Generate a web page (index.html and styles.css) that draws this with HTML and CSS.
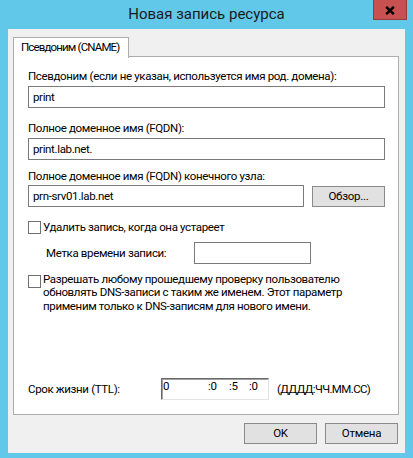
FILE: index.html
```html
<!DOCTYPE html>
<html lang="ru">
<head>
<meta charset="utf-8">
<title>Новая запись ресурса</title>
<link rel="stylesheet" href="styles.css">
</head>
<body>
<div class="window">
  <div class="titlebar">
    <span class="title">Новая запись ресурса</span>
    <button class="close" aria-label="Закрыть">
      <svg width="10" height="9" viewBox="0 0 10 9"><path d="M1.2 0.8 L8.8 8.2 M8.8 0.8 L1.2 8.2" stroke="#000" stroke-width="2.4" fill="none"/></svg>
    </button>
  </div>
  <div class="client">
    <div class="tabs"><div class="tab">Псевдоним (CNAME)</div></div>
    <div class="panel">
      <div class="lbl l1">Псевдоним (если не указан, используется имя род. домена):</div>
      <div class="textbox tb1">print</div>
      <div class="lbl l2">Полное доменное имя (FQDN):</div>
      <div class="textbox tb2">print.lab.net.</div>
      <div class="lbl l3">Полное доменное имя (FQDN) конечного узла:</div>
      <div class="target-row">
        <div class="textbox grow">prn-srv01.lab.net</div>
        <button class="btn">Обзор...</button>
      </div>
      <div class="check-row c1">
        <span class="checkbox"></span>
        <span class="check-text">Удалить запись, когда она устареет</span>
      </div>
      <div class="stamp-row">
        <span class="stamp-label">Метка времени записи:</span>
        <div class="textbox stamp-box"></div>
      </div>
      <div class="check-row c2">
        <span class="checkbox"></span>
        <span class="check-text multi">Разрешать любому прошедшему проверку пользователю<br>обновлять DNS-записи с таким же именем. Этот параметр<br>применим только к DNS-записям для нового имени.</span>
      </div>
      <div class="ttl-row">
        <span class="ttl-label">Срок жизни (TTL):</span>
        <div class="ttl-box"><span class="seg s1">0</span><span class="seg s2">:0</span><span class="seg s3">:5</span><span class="seg s4">:0</span></div>
        <span class="ttl-hint">(ДДДД:ЧЧ.ММ.СС)</span>
      </div>
    </div>
    <div class="actions">
      <button class="btn">OK</button>
      <button class="btn">Отмена</button>
    </div>
  </div>
</div>
</body>
</html>
```

FILE: styles.css
```css
html, body {
  margin: 0;
  padding: 0;
  background: #62c8ea;
}
body {
  width: 413px;
  height: 458px;
  overflow: hidden;
  font-family: "Segoe UI", Roboto, "Liberation Sans", sans-serif;
  font-size: 11.5px;
  letter-spacing: -0.35px;
  color: #000;
}
.window {
  width: 413px;
  height: 458px;
}
.titlebar {
  position: relative;
  height: 29px;
  text-align: center;
}
.title {
  font-size: 15px;
  letter-spacing: 0;
  line-height: 28px;
  color: #1a1a1a;
}
.close {
  position: absolute;
  top: 0;
  right: 6px;
  width: 34px;
  height: 20px;
  margin: 0;
  padding: 0;
  border: 1px solid #9b3a36;
  border-top: none;
  background: #c75050;
  display: flex;
  align-items: center;
  justify-content: center;
}
.close svg { display: block; margin-top: 1px; }
.client {
  margin: 0 8px;
  height: 424px;
  box-sizing: border-box;
  background: #f0f0f0;
  padding: 8px 6px 0 5px;
}
.tabs {
  display: flex;
  height: 20px;
  position: relative;
  z-index: 1;
  margin-bottom: -1px;
}
.tab {
  width: 116px;
  height: 21px;
  box-sizing: border-box;
  border: 1px solid #adadad;
  border-bottom: none;
  background: #fff;
  padding-left: 7px;
  line-height: 19px;
  letter-spacing: -0.85px;
  white-space: nowrap;
}
.panel {
  height: 359px;
  box-sizing: border-box;
  border: 1px solid #adadad;
  background: #fff;
  padding: 12px 13px 14px 14px;
  display: flex;
  flex-direction: column;
}
.lbl {
  line-height: 15px;
  white-space: nowrap;
}
.l2 { margin-top: 13px; }
.l3 { margin-top: 9px; }
.textbox {
  height: 22px;
  box-sizing: border-box;
  border: 1px solid #7a7a7a;
  background: #fff;
  padding-left: 4px;
  line-height: 20px;
  white-space: nowrap;
}
.tb1, .tb2 { margin-top: 2px; }
.target-row {
  display: flex;
  gap: 8px;
  margin-top: 1px;
  align-items: flex-start;
}
.grow { flex: 1; }
.btn {
  width: 73px;
  height: 21px;
  box-sizing: border-box;
  margin: 0;
  padding: 0;
  border: 1px solid #8a8a8a;
  background: #e1e1e1;
  font: inherit;
  letter-spacing: -0.25px;
  color: #000;
  line-height: 19px;
}
.target-row .btn { margin-top: 1px; }
.check-row {
  display: flex;
  align-items: flex-start;
}
.c1 { margin-top: 13px; line-height: 15px; }
.c1 .checkbox { margin-top: 1px; }
.checkbox {
  flex: none;
  width: 13px;
  height: 13px;
  box-sizing: border-box;
  border: 1px solid #707070;
  background: #fff;
  margin-right: 2px;
}
.stamp-row {
  display: flex;
  align-items: center;
  margin-top: 7px;
  padding-left: 18px;
}
.stamp-label { width: 148px; }
.stamp-box { width: 117px; }
.c2 { margin-top: 9px; line-height: 13.3px; }
.c2 .checkbox { margin-top: 2px; }
.multi { white-space: nowrap; }
.ttl-row {
  margin-top: auto;
  display: flex;
  align-items: center;
  height: 22px;
}
.ttl-label { width: 133px; }
.ttl-box {
  width: 108px;
  height: 22px;
  box-sizing: border-box;
  border: 1px solid;
  border-color: #6a6a6a #e3e3e3 #e3e3e3 #6a6a6a;
  box-shadow: inset 1px 1px 0 #a0a0a0;
  background: #fff;
  display: flex;
  padding-left: 1px;
  line-height: 15px;
  align-self: flex-start;
}
.seg { display: block; }
.s1 { width: 45px; }
.s2 { width: 21px; }
.s3 { width: 20px; }
.ttl-hint { margin-left: 8px; letter-spacing: -0.6px; }
.actions {
  display: flex;
  justify-content: flex-end;
  gap: 8px;
  margin-top: 8px;
  padding-right: 1px;
}
```
